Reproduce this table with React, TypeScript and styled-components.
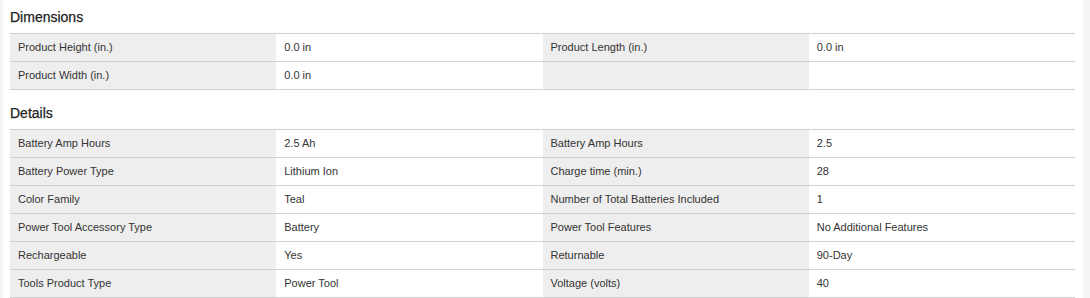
import React from "react";
import styled, { createGlobalStyle } from "styled-components";

const GlobalStyle = createGlobalStyle`
  html, body {
    margin: 0;
    padding: 0;
    background: #fff;
  }
  body {
    font-family: "Liberation Sans", Arial, sans-serif;
    color: #333;
  }
`;

const Page = styled.div`
  background: #f4f4f4;
  padding: 0 7px 0 3px;
  min-height: 298px;
`;

const Content = styled.div`
  background: #fff;
  padding: 0 8px 2px 7px;
  min-height: 298px;
  box-sizing: border-box;
`;

const Section = styled.section`
  & + & {
    margin-top: 6px;
  }
`;

const Heading = styled.h3`
  margin: 0;
  height: 33px;
  display: flex;
  align-items: center;
  font-size: 14px;
  font-weight: normal;
  color: #222;
  -webkit-text-stroke: 0.25px #222;
`;

const Table = styled.div`
  display: grid;
  grid-template-columns: repeat(4, 1fr);
  border-top: 1px solid #d0d0d0;
`;

type CellProps = {
  /** label cells have the grey fill */
  $label?: boolean;
};

const Cell = styled.div<CellProps>`
  height: 27px;
  box-sizing: border-box;
  display: flex;
  align-items: center;
  padding: 0 0 2px 8px;
  font-size: 11px;
  color: #333;
  background: ${({ $label }) => ($label ? "#eeeeee" : "#fff")};
  border-bottom: 1px solid #d0d0d0;
  height: 28px;
`;

type Spec = [string, string];

const dimensions: Spec[] = [
  ["Product Height (in.)", "0.0 in"],
  ["Product Length (in.)", "0.0 in"],
  ["Product Width (in.)", "0.0 in"],
  ["", ""],
];

const details: Spec[] = [
  ["Battery Amp Hours", "2.5 Ah"],
  ["Battery Amp Hours", "2.5"],
  ["Battery Power Type", "Lithium Ion"],
  ["Charge time (min.)", "28"],
  ["Color Family", "Teal"],
  ["Number of Total Batteries Included", "1"],
  ["Power Tool Accessory Type", "Battery"],
  ["Power Tool Features", "No Additional Features"],
  ["Rechargeable", "Yes"],
  ["Returnable", "90-Day"],
  ["Tools Product Type", "Power Tool"],
  ["Voltage (volts)", "40"],
];

function SpecTable({ title, specs }: { title: string; specs: Spec[] }) {
  return (
    <Section>
      <Heading>{title}</Heading>
      <Table>
        {specs.map(([label, value], i) => (
          <React.Fragment key={i}>
            <Cell $label>{label}</Cell>
            <Cell>{value}</Cell>
          </React.Fragment>
        ))}
      </Table>
    </Section>
  );
}

export default function App() {
  return (
    <>
      <GlobalStyle />
      <Page>
        <Content>
          <SpecTable title="Dimensions" specs={dimensions} />
          <SpecTable title="Details" specs={details} />
        </Content>
      </Page>
    </>
  );
}
